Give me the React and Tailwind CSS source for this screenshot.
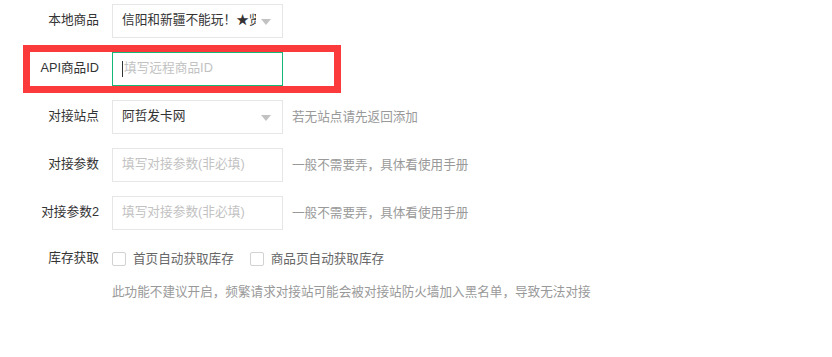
const font = { fontFamily: '"Liberation Sans", "Noto Sans CJK SC", sans-serif' }

function Arrow() {
  return (
    <span className="absolute right-[11px] top-1/2 -translate-y-[2px] h-0 w-0 border-x-[5px] border-t-[6px] border-x-transparent border-t-[#c2c2c2]" />
  )
}

function Label({ children }) {
  return <div className="w-[69px] shrink-0 text-right text-[12.7px] text-[#333]">{children}</div>
}

function Select({ value }) {
  return (
    <div className="relative ml-[13px] flex h-[34px] w-[171px] shrink-0 items-center border border-[#e6e6e6] bg-white pl-[9px] pr-[26px]">
      <span className="overflow-hidden whitespace-nowrap text-[12.7px] text-[#333]">{value}</span>
      <Arrow />
    </div>
  )
}

function Input({ placeholder, focused }) {
  return (
    <div
      className={`ml-[13px] flex h-[34px] w-[171px] shrink-0 items-center border bg-white pl-[9px] ${
        focused ? 'border-[#16b777]' : 'border-[#e6e6e6]'
      }`}
    >
      {focused && <span className="mr-[1px] h-[16px] w-px bg-[#333]" />}
      <span className="whitespace-nowrap text-[12.7px] text-[#c2c2c2]">{placeholder}</span>
    </div>
  )
}

function Hint({ children }) {
  return <div className="ml-[9px] whitespace-nowrap text-[12.6px] text-[#999]">{children}</div>
}

function Checkbox({ label }) {
  return (
    <div className="flex items-center">
      <span className="h-[14px] w-[14px] rounded-[2px] border border-[#d2d2d2] bg-white" />
      <span className="ml-[7px] text-[12.6px] text-[#666]">{label}</span>
    </div>
  )
}

export default function App() {
  return (
    <div className="h-[357px] w-[832px] bg-white pl-[30px] pt-[4px]" style={font}>
      <div className="mb-[14px] flex h-[34px] items-center">
        <Label>本地商品</Label>
        <Select value="信阳和新疆不能玩！★贤" />
      </div>

      <div className="mb-[14px] flex h-[34px] w-[304px] items-center [outline:7px_solid_#fb3b3b]">
        <Label>API商品ID</Label>
        <Input placeholder="填写远程商品ID" focused />
      </div>

      <div className="mb-[14px] flex h-[34px] items-center">
        <Label>对接站点</Label>
        <Select value="阿哲发卡网" />
        <Hint>若无站点请先返回添加</Hint>
      </div>

      <div className="mb-[14px] flex h-[34px] items-center">
        <Label>对接参数</Label>
        <Input placeholder="填写对接参数(非必填)" />
        <Hint>一般不需要弄，具体看使用手册</Hint>
      </div>

      <div className="flex h-[34px] items-center">
        <Label>对接参数2</Label>
        <Input placeholder="填写对接参数(非必填)" />
        <Hint>一般不需要弄，具体看使用手册</Hint>
      </div>

      <div className="mt-[19px] flex h-[20px] items-center">
        <Label>库存获取</Label>
        <div className="ml-[13px] flex items-center gap-[16px]">
          <Checkbox label="首页自动获取库存" />
          <Checkbox label="商品页自动获取库存" />
        </div>
      </div>

      <div className="ml-[82px] mt-[13px] whitespace-nowrap text-[12.6px] leading-[20px] text-[#999]">
        此功能不建议开启，频繁请求对接站可能会被对接站防火墙加入黑名单，导致无法对接
      </div>
    </div>
  )
}
